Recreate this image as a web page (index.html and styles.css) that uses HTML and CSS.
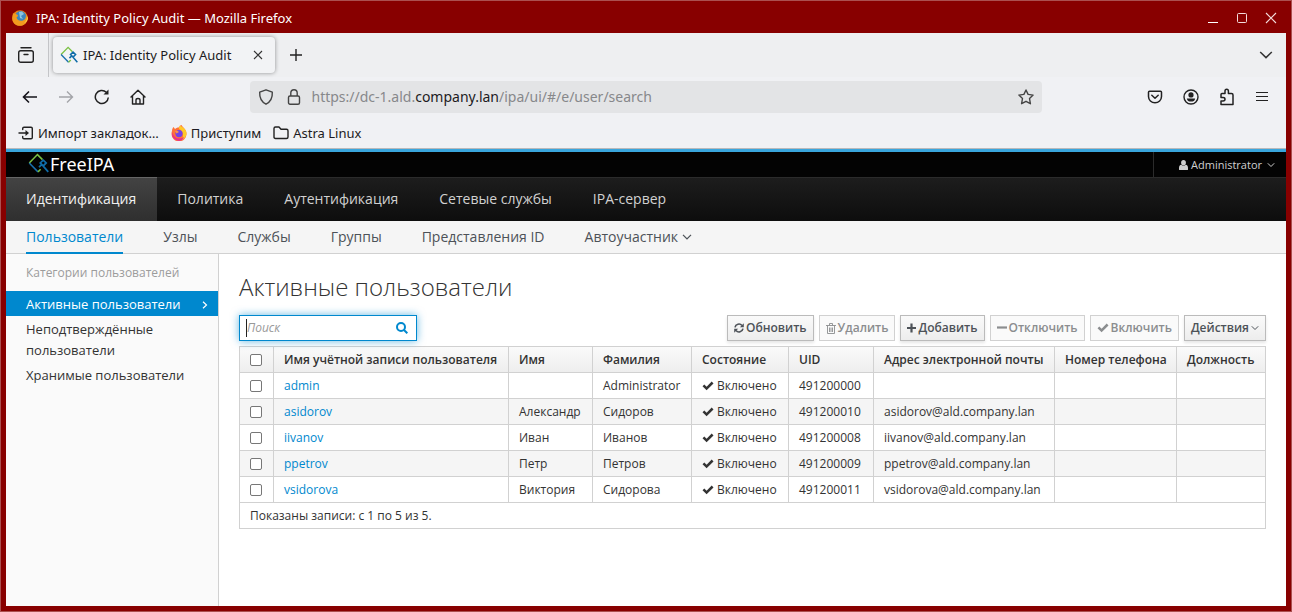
FILE: index.html
```html
<!DOCTYPE html>
<html lang="ru">
<head>
<meta charset="utf-8">
<title>IPA: Identity Policy Audit</title>
<link rel="stylesheet" href="styles.css">
</head>
<body>
<svg class="defs" aria-hidden="true">
  <defs>
    <symbol id="ipa" viewBox="0 0 20 20">
      <path d="M1.2 9.500 L9 1.500 L13.800 6.300" fill="none" stroke="#7ac143" stroke-width="1.500"/>
      <path d="M1.200 9.500 L9.500 18" fill="none" stroke="#1a6fae" stroke-width="1.500"/>
      <path d="M9.500 18 L12 15.500" fill="none" stroke="#7ac143" stroke-width="1.500"/>
      <path d="M14.500 6.800 L17.300 9.500 L14.500 12.300 L11.700 9.500 Z M12.500 11.500 L10.500 13.500 M14.500 12.500 L19.300 18" fill="none" stroke="#0f6ca8" stroke-width="1.700"/>
    </symbol>
    <symbol id="check" viewBox="0 0 12 10"><path d="M0.5 5.2 L2.3 3.4 L4.6 5.7 L9.7 0.6 L11.5 2.4 L4.6 9.3 Z" fill="currentColor"/></symbol>
    <symbol id="angle" viewBox="0 0 8 6"><path d="M0.8 1.3 L4 4.5 L7.2 1.3" fill="none" stroke="currentColor" stroke-width="1"/></symbol>
  </defs>
</svg>
<div class="window">
  <header class="titlebar">
    <svg width="16" height="16" viewBox="0 0 16 16"><circle cx="8" cy="8" r="7.8" fill="#e8821a"/><circle cx="8.6" cy="6.6" r="5.6" fill="#3d86bd"/><path d="M7 2 L10 1.4 L12 4 L9 6 L11 9 L8 8 Z" fill="#8cc4e0"/><path d="M1 3 C2 4 3 3.6 4 4 C5 4.500 6 5 6 6 L4.500 7.500 C5 10 8 11.500 11 10.500 C13 10 14 8 14 5 L15.800 8 C15.500 12 12 15.800 8 15.800 C3 15.800 0 12 0.300 8 Z" fill="#f39a1e"/><path d="M14.400 4 C15.800 7 15 11 12 13 C14 13 15.800 10 15.800 8 Z" fill="#ffd54a"/></svg>
    <span class="titlebar-text">IPA: Identity Policy Audit — Mozilla Firefox</span>
    <div class="window-controls">
      <button type="button" aria-label="Свернуть"><svg width="12" height="12" viewBox="0 0 12 12"><path d="M1 10.500 H11" stroke="#fff"/></svg></button>
      <button type="button" aria-label="Развернуть"><svg width="12" height="12" viewBox="0 0 12 12"><rect x="1.500" y="1.500" width="9" height="9" rx="1" fill="none" stroke="#f3dcdc"/></svg></button>
      <button type="button" aria-label="Закрыть"><svg width="12" height="12" viewBox="0 0 12 12"><path d="M1 1 L11 11 M11 1 L1 11" stroke="#f3dcdc" stroke-width="1.100"/></svg></button>
    </div>
  </header>
  <div class="browser">
    <div class="tabstrip">
      <button type="button" class="firefox-view" aria-label="Firefox View"><svg width="18" height="18" viewBox="0 0 18 18" fill="none" stroke="#222" stroke-width="1.400" stroke-linecap="round"><path d="M4 1.700 H14"/><rect x="1.700" y="4.700" width="14.600" height="11.600" rx="2"/><path d="M7 8.500 H11"/></svg></button>
      <div class="tab">
        <svg width="18" height="18"><use href="#ipa"/></svg>
        <span class="tab-title">IPA: Identity Policy Audit</span>
        <button type="button" aria-label="Закрыть вкладку"><svg width="10" height="10" viewBox="0 0 10 10"><path d="M1 1 L9 9 M9 1 L1 9" stroke="#333" stroke-width="1.100"/></svg></button>
      </div>
      <button type="button" class="new-tab" aria-label="Новая вкладка"><svg width="14" height="14" viewBox="0 0 14 14"><path d="M1 7 H13 M7 1 V13" stroke="#222" stroke-width="1.400"/></svg></button>
      <button type="button" class="all-tabs" aria-label="Список вкладок"><svg width="14" height="8" viewBox="0 0 14 8"><path d="M1.200 1 L7 6.600 L12.800 1" fill="none" stroke="#333" stroke-width="1.500"/></svg></button>
    </div>
    <div class="toolbar">
      <div class="nav-buttons">
        <button type="button" aria-label="Назад"><svg width="16" height="16" viewBox="0 0 16 16" fill="none" stroke="#15141a" stroke-width="1.600"><path d="M15 8 H2 M7 2.500 L1.500 8 L7 13.500"/></svg></button>
        <button type="button" aria-label="Вперёд" disabled><svg width="16" height="16" viewBox="0 0 16 16" fill="none" stroke="#a3a4a8" stroke-width="1.400"><path d="M1 8 H14 M9 2.500 L14.500 8 L9 13.500"/></svg></button>
        <button type="button" aria-label="Обновить страницу"><svg width="16" height="16" viewBox="0 0 16 16" fill="none" stroke="#222" stroke-width="1.500"><path d="M14.300 8.500 A6.500 6.500 0 1 1 12.300 3.300"/><path d="M14.500 0.500 V5.500 H9.500 Z" fill="#222" stroke="none"/></svg></button>
        <button type="button" aria-label="Домой"><svg width="16" height="16" viewBox="0 0 16 16" fill="none" stroke="#222" stroke-width="1.400" stroke-linecap="round" stroke-linejoin="round"><path d="M1 8 L8 1.200 L15 8 M2.500 7 V15 H13.500 V7 M6 15 V11 Q6 9.500 8 9.500 Q10 9.500 10 11 V15"/></svg></button>
      </div>
      <div class="urlbar">
        <svg width="16" height="16" viewBox="0 0 16 16" fill="none" stroke="#444" stroke-width="1.400"><path d="M8 0.800 L14.300 3.200 Q14.800 11.500 8 15.200 Q1.200 11.500 1.700 3.200 Z" stroke-linejoin="round"/></svg>
        <svg class="lock" width="14" height="16" viewBox="0 0 14 16" fill="none" stroke="#444" stroke-width="1.400"><rect x="1.500" y="7" width="11" height="8.200" rx="1.500"/><path d="M3.800 7 V4 Q3.800 0.800 7 0.800 Q10.200 0.800 10.200 4 V7"/></svg>
        <span class="url">https://dc-1.ald.<b>company.lan</b>/ipa/ui/#/e/user/search</span>
        <button type="button" aria-label="Добавить в закладки"><svg width="16" height="16" viewBox="0 0 16 16" fill="none" stroke="#444" stroke-width="1.400" stroke-linejoin="round"><path d="M8 1 L10.100 5.400 L15.100 6.100 L11.500 9.500 L12.400 14.700 L8 12.300 L3.600 14.700 L4.500 9.500 L0.900 6.100 L5.900 5.400 Z"/></svg></button>
      </div>
      <div class="tool-buttons">
        <button type="button" aria-label="Pocket"><svg width="16" height="16" viewBox="0 0 16 16" fill="none" stroke="#222" stroke-width="1.500" stroke-linecap="round" stroke-linejoin="round"><path d="M2.500 2.200 H13.500 Q14.500 2.200 14.500 3.200 V7.500 A6.500 6.300 0 0 1 1.500 7.500 V3.200 Q1.500 2.200 2.500 2.200 Z M4.800 6.300 L8 9.300 L11.200 6.300"/></svg></button>
        <button type="button" aria-label="Аккаунт"><svg width="16" height="16" viewBox="0 0 16 16"><circle cx="8" cy="8" r="7" fill="none" stroke="#222" stroke-width="1.400"/><circle cx="8" cy="5.900" r="2.600" fill="#222"/><path d="M3.800 9.400 H12.200 Q11.500 12.600 8 12.600 Q4.500 12.600 3.800 9.400 Z" fill="#222"/></svg></button>
        <button type="button" aria-label="Расширения"><svg width="16" height="18" viewBox="0 0 16 18" fill="none" stroke="#222" stroke-width="1.500" stroke-linejoin="round"><path d="M2 6.500 Q2 5.500 3 5.500 H6 V3 Q6 1.200 7.700 1.200 Q9.400 1.200 9.400 3 V5.500 H12.500 Q14 5.500 14 7 V16.500 H2 V13 H4 Q6 13 6 11.300 Q6 9.600 4 9.600 H2 Z"/></svg></button>
        <button type="button" aria-label="Меню"><svg width="14" height="12" viewBox="0 0 14 12"><path d="M1 1.500 H13 M1 5.500 H13 M1 9.500 H13" stroke="#222" stroke-width="1.200"/></svg></button>
      </div>
    </div>
    <div class="bookmarks">
      <a href="#import"><svg width="16" height="16" viewBox="0 0 16 16" fill="none" stroke="#222" stroke-width="1.400" stroke-linecap="round"><path d="M4.700 4.500 V3.500 Q4.700 2.200 6 2.200 H13 Q14.300 2.200 14.300 3.500 V12.500 Q14.300 13.800 13 13.800 H6 Q4.700 13.800 4.700 12.500 V11.500 M1 8 H8"/><path d="M7.500 5 L11 8 L7.500 11 Z" fill="#222" stroke="none"/></svg>Импорт закладок…</a>
      <a href="#start"><svg width="16" height="16" viewBox="0 0 16 16"><path d="M1 6 C1 4 2 2.500 2.500 2 L4 4 C6 2 8 3 8.500 2 C8.500 1 9.500 0 10.500 0 C12 3 15.500 4 15.500 9 A7.500 7.300 0 0 1 0.500 9 Q0.500 7 1 6 Z" fill="#ff7139"/><path d="M9 0.500 C13 3 16 5 15.500 9.500 C15 12 13 14 11 15 C13 10 12 6 8 4 C8 2 8.500 1 9 0.500 Z" fill="#ffc928"/><path d="M1 7 Q0.500 15 8 16 Q12 15.500 13 12 Q8 15 4 12 Q2 10 1 7 Z" fill="#e8318c"/><circle cx="8" cy="8.600" r="3.600" fill="#7542e5"/><path d="M4 6 Q6 5 8 7 L5.500 8.500 Z" fill="#ff9640"/></svg>Приступим</a>
      <a href="#astra"><svg width="16" height="16" viewBox="0 0 16 16" fill="none" stroke="#222" stroke-width="1.400" stroke-linejoin="round"><path d="M1 3.500 Q1 2 2.500 2 H6 L8 4.200 H13.500 Q15 4.200 15 5.700 V12 Q15 13.500 13.500 13.500 H2.500 Q1 13.500 1 12 Z"/></svg>Astra Linux</a>
    </div>

    <div class="page">
      <div class="masthead">
        <a class="brand" href="#home"><svg width="21" height="21"><use href="#ipa"/></svg>FreeIPA</a>
        <button type="button" class="user-menu"><svg width="9" height="10" viewBox="0 0 9 10" fill="#cfcfcf"><ellipse cx="4.500" cy="2.700" rx="2.400" ry="2.700"/><path d="M0 9.500 V8 Q0 5 2.200 4.800 Q4.500 6.600 6.800 4.800 Q9 5 9 8 V9.500 Q9 10 8 10 H1 Q0 10 0 9.500 Z"/></svg>Administrator<svg class="caret" width="8" height="6"><use href="#angle"/></svg></button>
      </div>
      <nav class="primary">
        <a class="active" href="#identity">Идентификация</a>
        <a href="#policy">Политика</a>
        <a href="#auth">Аутентификация</a>
        <a href="#network">Сетевые службы</a>
        <a href="#ipaserver">IPA-сервер</a>
      </nav>
      <nav class="secondary">
        <a class="active" href="#users">Пользователи</a>
        <a href="#hosts">Узлы</a>
        <a href="#services">Службы</a>
        <a href="#groups">Группы</a>
        <a href="#views">Представления ID</a>
        <a href="#automember">Автоучастник<svg width="10" height="8"><use href="#angle"/></svg></a>
      </nav>
      <div class="columns">
        <aside class="sidebar">
          <h2>Категории пользователей</h2>
          <a class="active" href="#active">Активные пользователи<svg width="6" height="8" viewBox="0 0 6 8"><path d="M1 0.700 L4.500 4 L1 7.300" fill="none" stroke="#fff" stroke-width="1.200"/></svg></a>
          <a href="#stage">Неподтверждённые пользователи</a>
          <a href="#preserved">Хранимые пользователи</a>
        </aside>
        <main class="content">
          <h1>Активные пользователи</h1>
          <div class="controls">
            <form class="search">
              <input type="text" placeholder="Поиск" aria-label="Поиск">
              <button type="button" aria-label="Найти"><svg width="12" height="12" viewBox="0 0 12 12" fill="none" stroke="#0088ce" stroke-width="2"><circle cx="5" cy="5" r="4"/><path d="M8 8 L11.300 11.300"/></svg></button>
            </form>
            <div class="actions">
              <button type="button"><svg width="10" height="10" viewBox="0 0 10 10" fill="none" stroke="currentColor" stroke-width="1.600"><path d="M1 4.300 A4 4 0 0 1 8 2.500 M9 5.700 A4 4 0 0 1 2 7.500"/><path d="M9.800 0.300 V4.200 H5.900 Z M0.200 9.700 V5.800 H4.100 Z" fill="currentColor" stroke="none"/></svg>Обновить</button>
              <button type="button" disabled><svg width="10" height="11" viewBox="0 0 10 11" fill="none" stroke="currentColor"><path d="M0 2.500 H10 M3.500 2.500 V0.500 H6.500 V2.500 M1.500 2.500 V10.500 H8.500 V2.500 M3.500 4.500 V9 M5 4.500 V9 M6.500 4.500 V9" stroke-width="0.900"/></svg>Удалить</button>
              <button type="button"><svg width="9" height="10" viewBox="0 0 9 10"><path d="M0 5 H9 M4.500 0.500 V9.500" stroke="currentColor" stroke-width="2.200"/></svg>Добавить</button>
              <button type="button" disabled><svg width="10" height="10" viewBox="0 0 10 10"><path d="M0 4.500 H10" stroke="currentColor" stroke-width="2.200"/></svg>Отключить</button>
              <button type="button" disabled><svg width="12" height="10"><use href="#check"/></svg>Включить</button>
              <button type="button">Действия<svg width="8" height="6"><use href="#angle"/></svg></button>
            </div>
          </div>
          <table>
            <colgroup><col class="c-check"><col><col class="c-first"><col class="c-last"><col class="c-state"><col class="c-uid"><col class="c-mail"><col class="c-phone"><col class="c-job"></colgroup>
            <thead>
              <tr><th><input type="checkbox" aria-label="Выбрать все"></th><th>Имя учётной записи пользователя</th><th>Имя</th><th>Фамилия</th><th>Состояние</th><th>UID</th><th>Адрес электронной почты</th><th>Номер телефона</th><th>Должность</th></tr>
            </thead>
            <tbody>
              <tr><td><input type="checkbox" aria-label="admin"></td><td><a href="#admin">admin</a></td><td></td><td>Administrator</td><td><svg width="12" height="10"><use href="#check"/></svg>Включено</td><td>491200000</td><td></td><td></td><td></td></tr>
              <tr><td><input type="checkbox" aria-label="asidorov"></td><td><a href="#asidorov">asidorov</a></td><td>Александр</td><td>Сидоров</td><td><svg width="12" height="10"><use href="#check"/></svg>Включено</td><td>491200010</td><td>asidorov@ald.company.lan</td><td></td><td></td></tr>
              <tr><td><input type="checkbox" aria-label="iivanov"></td><td><a href="#iivanov">iivanov</a></td><td>Иван</td><td>Иванов</td><td><svg width="12" height="10"><use href="#check"/></svg>Включено</td><td>491200008</td><td>iivanov@ald.company.lan</td><td></td><td></td></tr>
              <tr><td><input type="checkbox" aria-label="ppetrov"></td><td><a href="#ppetrov">ppetrov</a></td><td>Петр</td><td>Петров</td><td><svg width="12" height="10"><use href="#check"/></svg>Включено</td><td>491200009</td><td>ppetrov@ald.company.lan</td><td></td><td></td></tr>
              <tr><td><input type="checkbox" aria-label="vsidorova"></td><td><a href="#vsidorova">vsidorova</a></td><td>Виктория</td><td>Сидорова</td><td><svg width="12" height="10"><use href="#check"/></svg>Включено</td><td>491200011</td><td>vsidorova@ald.company.lan</td><td></td><td></td></tr>
            </tbody>
            <tfoot><tr><td colspan="9">Показаны записи: с 1 по 5 из 5.</td></tr></tfoot>
          </table>
        </main>
      </div>
    </div>
  </div>
</div>
</body>
</html>
```

FILE: styles.css
```css
* { box-sizing: border-box; }
html, body { height: 100%; }
body { margin: 0; font-family: "Open Sans", sans-serif; font-size: 12px; line-height: 20px; color: #333; }
button { margin: 0; padding: 0; border: 0; background: none; font: inherit; color: inherit; display: flex; align-items: center; justify-content: center; }
a { color: inherit; text-decoration: none; }
svg { flex: none; }
.defs { position: absolute; width: 0; height: 0; }

.window { min-height: 100%; display: flex; flex-direction: column; background: #880000; border: 1px solid #ab5050; padding: 0 5px 5px; }
.titlebar { height: 32px; display: flex; align-items: center; gap: 8px; padding: 2px 9px 0 6px; color: #fff; font: 13px/20px "Noto Sans", sans-serif; }
.window-controls { margin-left: auto; display: flex; gap: 17px; }
.browser { flex: 1; display: flex; flex-direction: column; background: #f0f1f4; font-family: "Noto Sans", sans-serif; font-size: 14px; color: #1c1b22; }

.tabstrip { height: 44px; display: flex; align-items: center; background: #eeeff1; }
.firefox-view { align-self: stretch; width: 43px; padding-right: 2px; border-right: 1px solid #c4c5c8; }
.tab { width: 222px; height: 36px; margin-left: 4px; padding: 0 12px 0 7px; display: flex; align-items: center; background: #f2f3f5; border-radius: 4px; box-shadow: 0 0 4px rgba(0, 0, 0, .4); font-size: 13px; }
.tab-title { flex: 1; margin-left: 5px; white-space: nowrap; }
.new-tab { width: 14px; margin-left: 14px; }
.all-tabs { margin: 0 13px 0 auto; }

.toolbar { height: 40px; display: flex; align-items: center; justify-content: space-between; padding: 0 17px 0 16px; }
.nav-buttons { display: flex; gap: 20px; }
.tool-buttons { display: flex; gap: 20px; }
.urlbar { flex: 1; max-width: 792px; height: 32px; display: flex; align-items: center; gap: 13px; margin: 0 14px 0 12px; padding: 0 8px; border-radius: 4px; background: #e3e4e6; }
.url { flex: 1; margin-left: -2px; color: #87888b; white-space: nowrap; }
.url b { font-weight: 400; color: #1c1b22; }

.bookmarks { height: 32px; display: flex; align-items: center; gap: 12px; padding: 0 12px; border-bottom: 1px solid #b8b9bb; font-size: 13px; }
.bookmarks a { display: flex; align-items: center; gap: 4px; white-space: nowrap; }

.page { flex: 1; display: flex; flex-direction: column; background: #fff; border-top: 3px solid #39a5dc; color: #333; font-family: "Open Sans", sans-serif; font-size: 12px; }
.masthead { height: 25px; display: flex; justify-content: space-between; background: #030303; }
.brand { display: flex; align-items: center; gap: 1px; margin-left: 22px; padding-bottom: 2px; font: 18px/22px "Noto Sans", sans-serif; color: #fff; }
.user-menu { gap: 3px; padding: 0 11px 0 25px; border-left: 1px solid #2b2b2b; font-size: 11px; color: #cfcfcf; }
.caret { margin-left: 2px; }

.primary { height: 44px; display: flex; background: linear-gradient(#1d1d1d, #0d0d0d); border-top: 1px solid #2b2b2b; font-size: 14px; }
.primary a { display: flex; align-items: center; padding: 0 21px 2px 20px; color: #d1d1d1; }
.primary a.active { background: linear-gradient(#434343, #2f2f2f); color: #f1f1f1; box-shadow: 0 -1px #666; }

.secondary { height: 33px; display: flex; gap: 40px; padding: 0 20px; background: #f5f5f5; border-bottom: 1px solid #d1d1d1; font-size: 14px; color: #4d5258; }
.secondary a { display: flex; align-items: center; gap: 4px; height: 33px; border-bottom: 2px solid transparent; }
.secondary a.active { color: #0088ce; border-color: #0088ce; }

.columns { flex: 1; display: flex; }
.sidebar { width: 213px; background: #fafafa; border-right: 1px solid #d1d1d1; font-size: 13px; line-height: 21px; }
.sidebar h2 { margin: 0; padding: 8px 20px; font-size: 12px; font-weight: 400; color: #9c9c9c; }
.sidebar a { display: flex; align-items: center; justify-content: space-between; padding: 3px 10px 1px 20px; }
.sidebar a.active { background: #0088ce; color: #fff; }

.content { flex: 1; min-width: 0; padding: 19px 20px 0; }
h1 { margin: 0 0 14px; font-size: 24px; line-height: 28px; font-weight: 300; }
.controls { display: flex; justify-content: space-between; margin-bottom: 5px; }
.search { width: 178px; height: 26px; display: flex; align-items: center; padding: 0 8px 0 6px; border: 1px solid #0088ce; box-shadow: 0 0 8px rgba(0, 136, 206, .6); background: #fff; }
.search input { flex: 1; min-width: 0; height: 18px; padding: 0; border: 0; border-left: 1px solid #222; outline: 0; background: none; font: 12px/18px "Open Sans", sans-serif; }
.search input::placeholder { color: #999; font-style: italic; }
.actions { display: flex; gap: 5px; }
.actions button { height: 26px; gap: 2px; padding: 0 6px; border: 1px solid #bbb; background: linear-gradient(#fafafa, #ededed); box-shadow: 0 2px 3px rgba(3, 3, 3, .1); font-weight: 600; color: #4d5258; white-space: nowrap; }
.actions button:disabled { background: #fafafa; border-color: #d1d1d1; box-shadow: none; color: #8b8d8f; }

table { width: 100%; table-layout: fixed; border-collapse: collapse; border: 1px solid #d1d1d1; }
th, td { height: 26px; padding: 3px 10px 2px; border: 1px solid #d1d1d1; text-align: left; white-space: nowrap; }
th { font-weight: 600; }
thead { background: linear-gradient(#fafafa, #ededed); }
tbody tr:nth-child(even) { background: #f5f5f5; }
td a { color: #0088ce; }
td svg { margin-right: 3px; vertical-align: -1px; }
table input { appearance: none; display: block; width: 12px; height: 12px; margin: 0 0 1px; border: 1px solid #777; border-radius: 2px; background: #fff; }
.c-check { width: 34px; }
.c-first { width: 84px; }
.c-last { width: 99px; }
.c-state { width: 97px; }
.c-uid { width: 85px; }
.c-mail { width: 181px; }
.c-phone { width: 122px; }
.c-job { width: 89px; }
```
